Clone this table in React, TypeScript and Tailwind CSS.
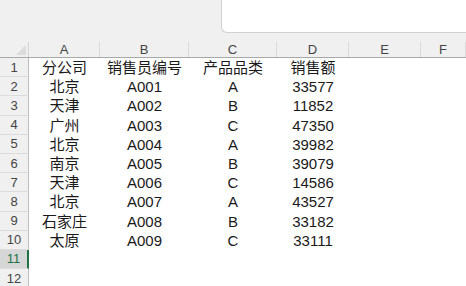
import React from 'react';

const cols = [
  { key: 'A', w: 'w-[71px]' },
  { key: 'B', w: 'w-[89px]' },
  { key: 'C', w: 'w-[88px]' },
  { key: 'D', w: 'w-[72px]' },
  { key: 'E', w: 'w-[72px]' },
  { key: 'F', w: 'flex-1' },
];

const rows: string[][] = [
  ['分公司', '销售员编号', '产品品类', '销售额'],
  ['北京', 'A001', 'A', '33577'],
  ['天津', 'A002', 'B', '11852'],
  ['广州', 'A003', 'C', '47350'],
  ['北京', 'A004', 'A', '39982'],
  ['南京', 'A005', 'B', '39079'],
  ['天津', 'A006', 'C', '14586'],
  ['北京', 'A007', 'A', '43527'],
  ['石家庄', 'A008', 'B', '33182'],
  ['太原', 'A009', 'C', '33111'],
  [],
  [],
];

const font = { fontFamily: '"Liberation Sans", "Noto Sans CJK SC", sans-serif' };

export default function App() {
  return (
    <div className="w-[466px] h-[286px] overflow-hidden bg-white flex flex-col" style={font}>
      {/* ribbon / formula area */}
      <div className="h-[42px] shrink-0 bg-[#f0f0f0] flex">
        <div className="ml-auto w-[245px] h-[33px] bg-white border-l border-b border-[#d1d1d1] rounded-bl-[6px]" />
      </div>

      {/* column headers */}
      <div className="h-[16px] shrink-0 flex bg-[#f0f0f0] border-b border-[#a8a8a8]">
        <div className="w-[29px] shrink-0 border-r border-[#d4d4d4] relative">
          <div className="absolute right-[2px] bottom-[2px] w-0 h-0 border-l-[10px] border-l-transparent border-b-[10px] border-b-[#dcdcdc]" />
        </div>
        {cols.map((c) => (
          <div
            key={c.key}
            className={`${c.w} shrink-0 border-r border-[#dadada] flex items-center justify-center text-[13px] leading-none text-[#444]`}
          >
            {c.key}
          </div>
        ))}
      </div>

      {/* rows */}
      {rows.map((r, i) => {
        const selected = i === 10;
        return (
          <div key={i} className="h-[19.2px] shrink-0 flex">
            <div
              className={`w-[29px] shrink-0 flex items-center justify-center text-[13px] leading-none border-b border-[#dcdcdc] ${
                selected
                  ? 'bg-[#d6d6d6] text-[#217346] border-r-2 border-r-[#217346]'
                  : 'bg-[#f0f0f0] text-[#444] border-r border-r-[#bdbdbd]'
              }`}
            >
              {i + 1}
            </div>
            {cols.map((c, j) => (
              <div
                key={c.key}
                className={`${c.w} shrink-0 flex items-center justify-center text-[15px] leading-none text-[#1a1a1a] whitespace-nowrap`}
              >
                {r[j] ?? ''}
              </div>
            ))}
          </div>
        );
      })}
    </div>
  );
}
